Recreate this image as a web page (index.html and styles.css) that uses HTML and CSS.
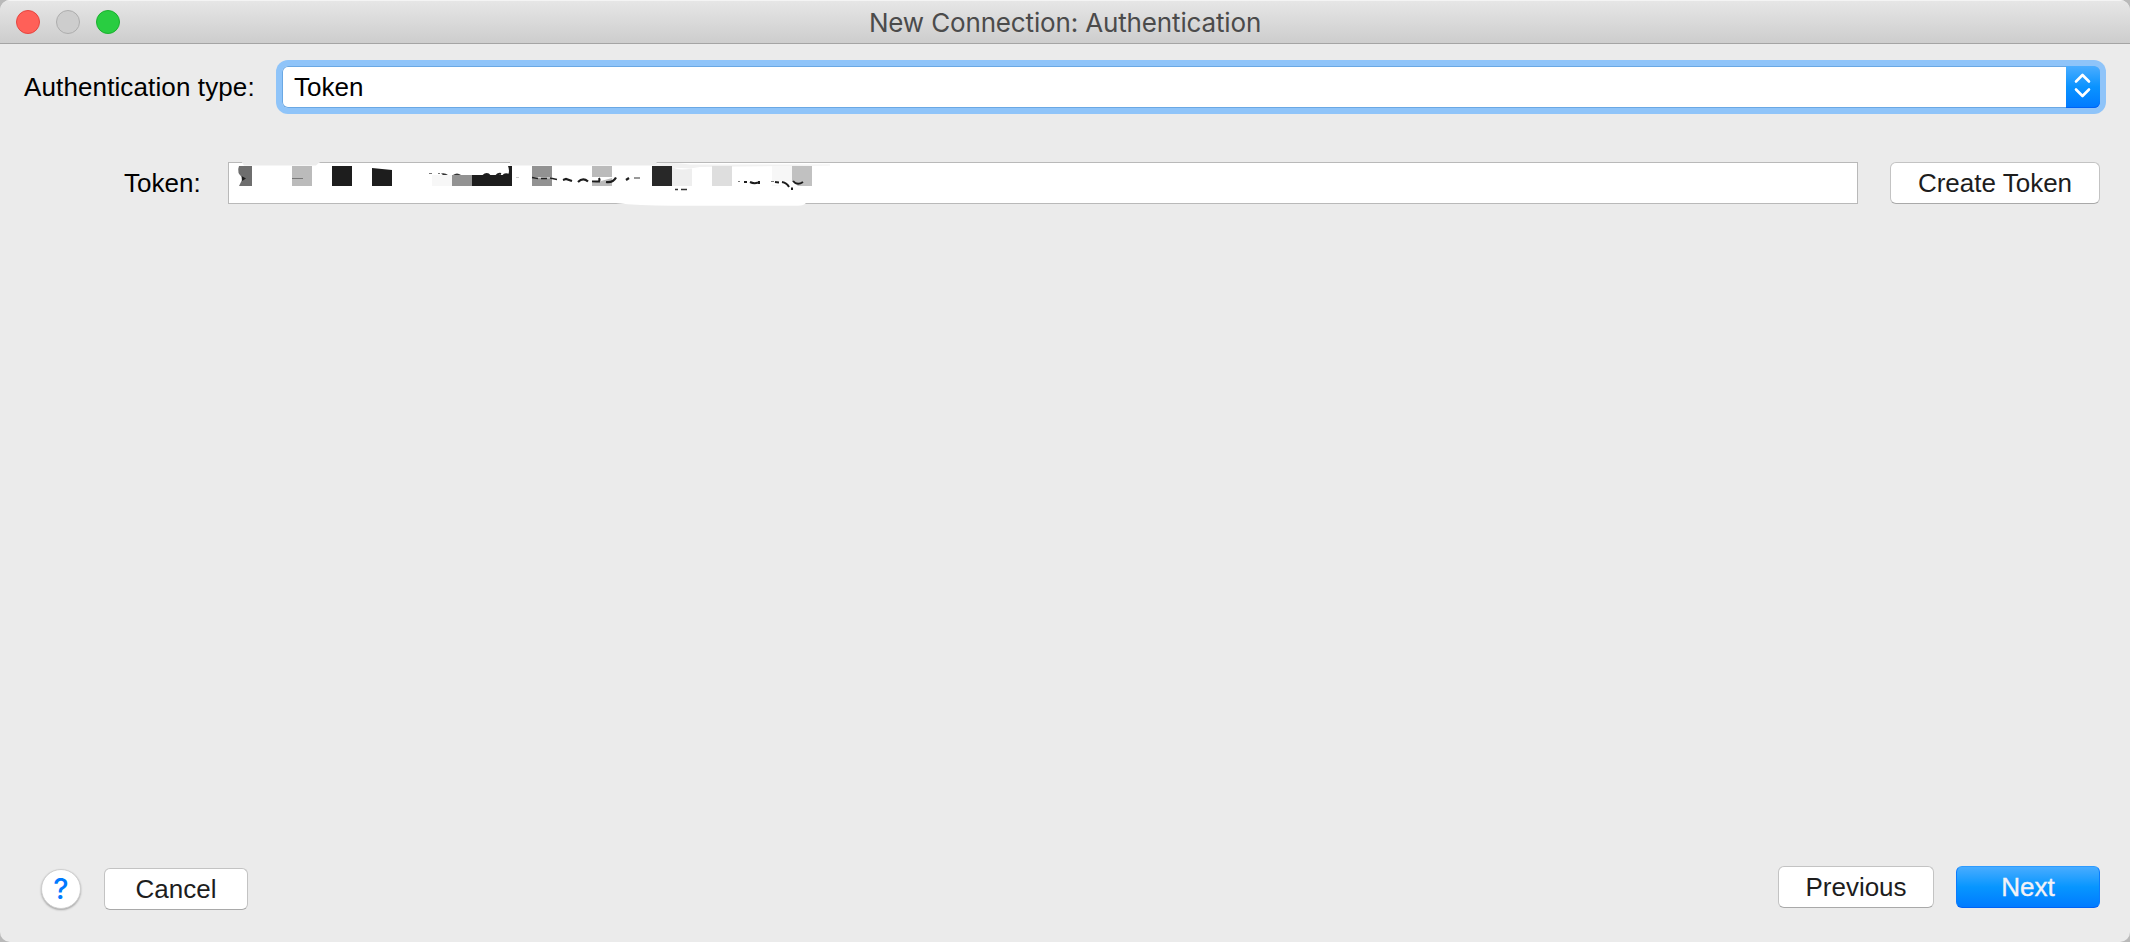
FILE: index.html
```html
<!DOCTYPE html>
<html lang="en">
<head>
<meta charset="utf-8">
<title>New Connection: Authentication</title>
<link rel="stylesheet" href="styles.css">
</head>
<body>
<div class="window">
  <header class="titlebar">
    <div class="lights"><span class="light close"></span><span class="light minimize"></span><span class="light expand"></span></div>
    <h1 class="title">New Connection: Authentication</h1>
  </header>
  <main class="form">
    <div class="row auth-row">
      <label class="auth-label">Authentication type:</label>
      <div class="select">
        <span class="select-value">Token</span>
        <span class="stepper"><svg width="34" height="42" viewBox="0 0 34 42" fill="none" stroke="#fff" stroke-width="2.6" stroke-linecap="round" stroke-linejoin="round"><path d="M10 15.500 16.500 9 23 15.500M10 23.500 16.500 30 23 23.500"/></svg></span>
      </div>
    </div>
    <div class="row token-row">
      <label class="token-label">Token:</label>
      <div class="token-field">
        <svg class="redaction" width="1630" height="60" viewBox="228 150 1630 60">
          <path fill="#ebebeb" d="M241 161H322Q318 163 316 165.500H244ZM510 161H657Q655 163 660 165.500H510Z"/>
          <path fill="#f1f1f1" d="M655 164Q665 162 690 164.500L830 164.500V165.500L700 167L690 168.500Q670 168 655 165Z"/>
          <path fill="#fff" d="M616 202H806V203Q804 205.500 798 205.700H680Q640 206 616 203Z"/>
          <path fill="#6e6e6e" d="M239 166H252V186H239L243 178Q236 173 239 166Z"/>
          <path fill="#1d1d1d" d="M241.500 176 246 178.500 242 181Z"/>
          <path fill="#bbb" d="M292 166H312V186H292ZM592 166H612V177H592Z"/>
          <path stroke="#777" d="M292 178.500H303"/>
          <path fill="#1d1d1d" d="M332 166H352V186H332ZM372 168 392 170V186H372Z"/>
          <path fill="#f7f7f7" d="M432 175H452V186H432ZM772 166H792V181H772Z"/>
          <path fill="#929292" d="M452 175H472V186H452Z"/>
          <path fill="#1d1d1d" d="M472 175H508Q510 171 508 166H512V186H472Z"/>
          <path stroke="#777" stroke-width="1" fill="none" d="M429 173.500H432M438 173.500H440"/>
          <path fill="#333" d="M441 173.500Q445 172.500 448 175H443ZM453 175Q457 172 461 175Z"/>
          <path stroke="#1d1d1d" stroke-width="2" fill="none" d="M483 176Q487 172 490 176M496 176Q498 173 501 174M503 176Q505 173 509 175"/>
          <path fill="#929292" d="M532 166H552V186H532Z"/>
          <path fill="#e8e8e8" d="M532 177 552 177.500V178.500L532 178Z"/>
          <path stroke="#222" stroke-width="1.300" fill="none" d="M532 177.500 538 178.500M541 178.500H547M550 178 557 179.500"/>
          <path fill="#bbb" d="M592 183Q602 181 612 178V186H592Z"/>
          <path stroke="#1d1d1d" stroke-width="2.200" fill="none" d="M563 180 566 179 572 181M578 182Q583 177 588 181.500M592 181.500H600M599 178Q600 180 599 181M606 182Q613 183 616 177.500M626 180 629 178"/>
          <path stroke="#777" stroke-width="1.500" d="M634 178H640"/>
          <path stroke="#ccc" d="M516 177.500H519"/>
          <path fill="#282828" d="M652 166H672V186H652Z"/>
          <path fill="#eee" d="M672 167Q678 171 692 168.500V186H672Z"/>
          <path stroke="#333" stroke-width="1.500" d="M675 189.500H678M681 189.500H687"/>
          <path fill="#dedede" d="M712 166H732V186H712Z"/>
          <path fill="#c1c1c1" d="M792 166H812V186H798L792 181Z"/>
          <path stroke="#777" stroke-width="1" d="M738 181.500H740M771 181.500H774"/>
          <path stroke="#1d1d1d" stroke-width="2" fill="none" d="M744 182H747M750 182Q754 184 758 182.500M759 181V184M775 182 779 182.500M782 182Q787 183 789 187M793 181Q797 186 803 182M792 187.500V190"/>
          <path fill="#f7f7f7" d="M772 184.500 784 186H772Z"/>
        </svg>
      </div>
      <button class="button create">Create Token</button>
    </div>
  </main>
  <footer class="footer">
    <div class="group left-group"><button class="help">?</button><button class="button cancel">Cancel</button></div>
    <div class="group right-group"><button class="button previous">Previous</button><button class="button next">Next</button></div>
  </footer>
</div>
</body>
</html>
```

FILE: styles.css
```css
* { box-sizing: border-box; }
body {
  margin: 0;
  background: #b9b9b9;
  font: 26px/30px "Liberation Sans", Arial, sans-serif;
  color: #000;
}
.window {
  height: 942px;
  display: flex;
  flex-direction: column;
  background: #ebebeb;
  border-radius: 10px;
  overflow: hidden;
}
.titlebar {
  height: 44px;
  display: grid;
  grid-template-columns: 1fr auto 1fr;
  align-items: center;
  background: linear-gradient(#e6e6e6, #cdcdcd);
  border-top: 1px solid #f4f4f4;
  border-bottom: 1px solid #a4a4a4;
}
.lights { display: flex; gap: 16px; padding-left: 16px; }
.light { width: 24px; height: 24px; border: 1px solid; border-radius: 50%; }
.close { background: #ff6058; border-color: #e5453f; }
.minimize { background: #cdcdcd; border-color: #adadad; }
.expand { background: #29cd41; border-color: #1bb02f; }
.title {
  margin: 2px 0 0;
  width: 394px;
  text-align: center;
  white-space: nowrap;
  font: 400 26px/30px Inter, sans-serif;
  letter-spacing: -0.15px;
  color: #4b4b4b;
}
.form { flex: 1; padding: 22px 30px 0 24px; }
.row { display: flex; align-items: center; height: 42px; }
.auth-label { width: 258px; letter-spacing: 0.12px; }
.select {
  flex: 1;
  height: 42px;
  display: flex;
  align-items: center;
  justify-content: space-between;
  background: #fff;
  border-radius: 6px;
  box-shadow: inset 0 0 0 1px #6aa8e4, 0 0 0 6px #8fc4f9;
}
.select-value { padding-left: 12px; }
.stepper {
  width: 34px;
  height: 42px;
  background: linear-gradient(#4badff, #0a93ff 50%, #007aff);
  border-radius: 0 6px 6px 0;
  box-shadow: inset 0 -1px #0062f5;
}
.stepper svg { display: block; }
.token-row { margin-top: 54px; }
.token-label { width: 204px; padding-left: 100px; }
.token-field {
  position: relative;
  flex: 1;
  height: 42px;
  margin-right: 32px;
  background: #fff;
  border: 1px solid #b9b9b9;
}
.redaction { position: absolute; left: -1px; top: -13px; }
.button {
  height: 42px;
  padding: 0;
  background: #fff;
  border: 1px solid #c3c3c3;
  border-bottom-color: #a9a9a9;
  border-radius: 6px;
  font: inherit;
  color: #1d1d1d;
}
.create { width: 210px; }
.footer {
  display: flex;
  justify-content: space-between;
  padding: 0 30px 32px 41px;
}
.group { display: flex; align-items: center; }
.left-group { gap: 23px; padding-top: 2px; }
.right-group { gap: 22px; padding-bottom: 2px; }
.left-group, .right-group { height: 44px; }
.help {
  width: 40px;
  height: 40px;
  padding: 0;
  border: 1px solid #cfcfcf;
  border-radius: 50%;
  background: #fff;
  box-shadow: 0 1px 2px rgba(0, 0, 0, 0.3);
  color: #007aff;
  font: 500 29px/36px Inter, sans-serif;
}
.cancel { width: 144px; }
.previous { width: 156px; }
.next {
  width: 144px;
  color: #f2f2f7;
  background: linear-gradient(#4badff, #0796ff 50%, #007aff) border-box;
  border-color: #2d9bff #0a7cff #0062f5;
  -webkit-text-stroke: 0.4px #f2f2f7;
}
```
